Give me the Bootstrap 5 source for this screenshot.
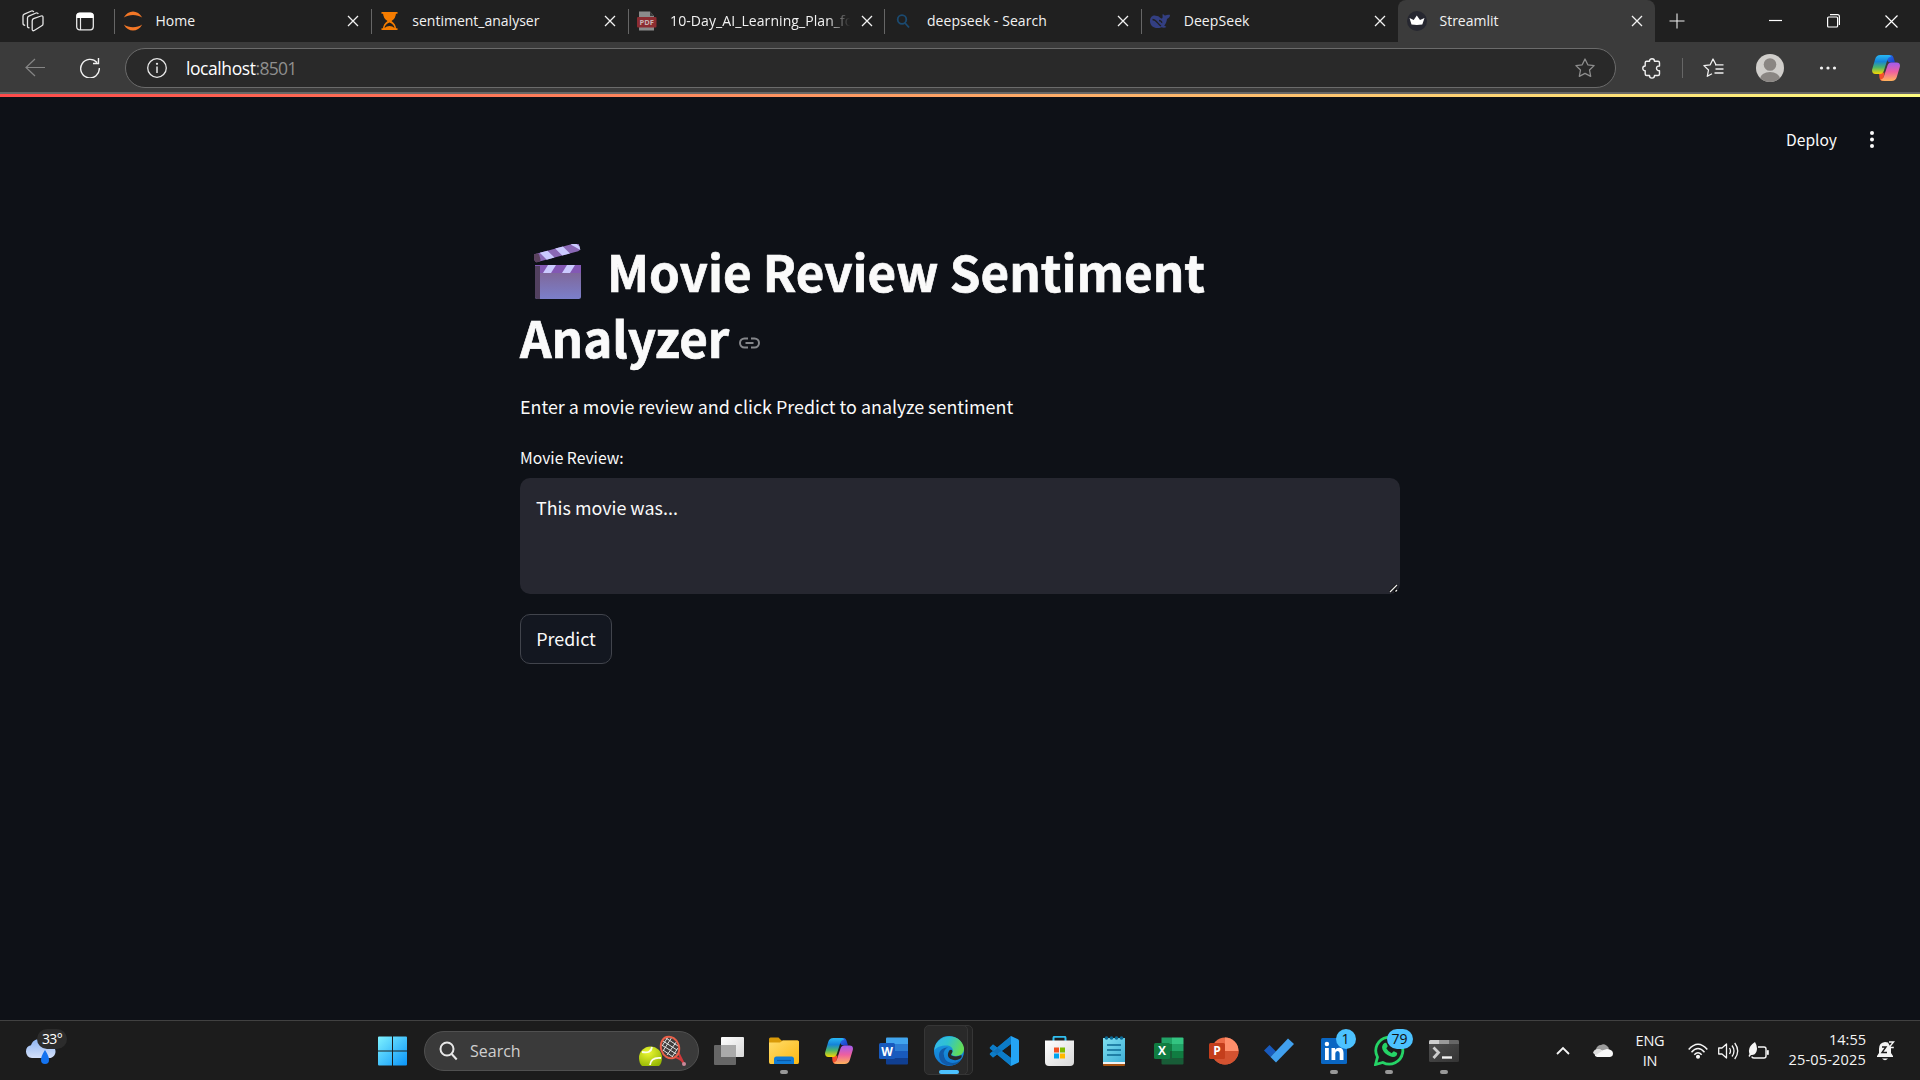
<!DOCTYPE html>
<html lang="en" data-bs-theme="dark">
<head>
<meta charset="utf-8">
<title>Streamlit</title>
<link rel="stylesheet" href="https://cdn.jsdelivr.net/npm/bootstrap@5.3.0/dist/css/bootstrap.min.css">
<style>
  html, body { height: 100%; }
  body { width: 1920px; height: 1080px; overflow: hidden; background: #0e1117; color: #fafafa; font-family: "Open Sans", "Noto Sans", sans-serif; }
  svg { display: block; flex: none; }

  .tabstrip { height: 42px; background: #202020; font-size: 14px; line-height: 20px; color: #f2f2f2; }
  .strip-left { width: 114px; padding-left: 22px; gap: 32px; }
  .tab { height: 42px; width: 256.8px; padding-left: 9px; position: relative; }
  .tab::before { content: ""; position: absolute; left: 0; top: 9px; width: 1px; height: 25px; background: #666; }
  .tab.current { background: #3b3b3b; border-radius: 8px 8px 0 0; width: 257px; }
  .tab.current::before { display: none; }
  .tab-icon { width: 20px; height: 20px; }
  .tab-title { margin-left: 12.500px; width: 183px; white-space: nowrap; overflow: hidden; }
  .tab-title.fade-end { -webkit-mask-image: linear-gradient(90deg, #000 158px, transparent 181px); mask-image: linear-gradient(90deg, #000 158px, transparent 181px); letter-spacing: .03px; }
  .tab-title.wide { padding-left: 1px; letter-spacing: .08px; }
  .tab-close { margin-left: 8.500px; }
  .win-buttons { padding-right: 22px; gap: 45px; }

  .toolbar { height: 50px; background: #3b3b3b; padding-top: 2px; }
  .back { margin-left: 25px; }
  .reload { margin-left: 35px; }
  .omnibox { width: 1491px; height: 40px; margin-left: 25px; border: 1px solid #6b6b6b; border-radius: 20px; background: #292929; padding: 0 20px 0 21px; }
  .address { margin-left: 19px; font-size: 17.5px; line-height: 24px; color: #fff; letter-spacing: -.42px; }
  .address .port { color: #8f8f8f; letter-spacing: -.7px; }
  .extensions { margin-left: 26px; }
  .tool-sep { width: 1px; height: 20px; background: #666; margin: 0 20px 0 21px; }
  .avatar { margin-left: 32px; }
  .more-dots, .copilot-btn { margin-left: 35px; }
  .edge-line { height: 2px; background: #676767; }
  .rainbow { height: 3px; background: linear-gradient(90deg, #ff4b4b, #fffd80); }

  .app { height: 926px; font-family: "Noto Sans CJK SC", "Noto Sans", sans-serif; }
  .app-header { padding: 30px 43px 0 0; height: 75px; gap: 30px; }
  .deploy { font-size: 15.6px; line-height: 24px; }
  .app-main { width: 880px; padding-top: 66px; }
  .app-title { font-size: 49.3px; line-height: 66px; font-weight: 700; margin: 0; color: #fafafa; -webkit-text-stroke: .7px #fafafa; }
  .clapper { display: inline-block; vertical-align: -8px; margin: 0 25px 0 14px; }
  .anchor { display: inline-block; vertical-align: 9px; margin-left: 10px; }
  .intro { font-size: 17.9px; line-height: 32px; margin: 20px 0 0; }
  .field-label { font-size: 15.7px; line-height: 24px; margin: 24px 0 8px; }
  .review-box { height: 116px; border: 0; border-radius: 10px; background: #262730; color: #fafafa; padding: 15px 16px; font-size: 17.9px; line-height: 28px; }
  .review-wrap { position: relative; }
  .grip { position: absolute; right: 2px; bottom: 1px; }
  .predict { width: 92px; height: 50px; margin-top: 20px; border: 1px solid #41444c; border-radius: 10px; background: #131720; color: #fafafa; font-size: 17.9px; line-height: 26px; padding: 0 0 2px; }

  .taskbar { height: 60px; background: #1c1c1c; border-top: 1px solid #414141; }
  .weather { width: 378px; padding-left: 25px; }
  .badge-pill { position: absolute; height: 20px; border-radius: 10px; display: flex; align-items: center; justify-content: center; font-size: 14px; line-height: 20px; }
  .temp { left: 12px; top: -7px; width: 30px; background: #2c2c2c; color: #fff; letter-spacing: -.6px; }
  .search-pill { width: 275px; height: 40px; margin-left: 17px; border: 1px solid #505050; border-radius: 20px; background: #3a3a3a; color: #cfcfcf; font-size: 16px; padding: 0 11px 0 14px; }
  .task-icons { margin-left: 2.500px; }
  .slot { width: 55px; height: 59px; position: relative; display: flex; align-items: center; justify-content: center; }
  .slot.running::after { content: ""; position: absolute; bottom: 6px; width: 8px; height: 4px; border-radius: 2px; background: #989898; }
  .slot.active::after { width: 20px; background: #4cc2ff; }
  .stack-back, .stack-front { position: absolute; top: 4px; height: 50px; border-radius: 5px; border: 1px solid #363636; background: #292929; }
  .stack-back { left: 12px; width: 39px; background: #242424; }
  .stack-front { left: 2px; width: 44px; }
  .slot svg { position: relative; }
  .count { top: 8px; background: #4cc2ff; color: #111; z-index: 2; }
  .count-one { left: 29px; width: 20px; }
  .count-many { left: 25px; width: 26px; }
  .tray { color: #f5f5f5; font-size: 14.5px; line-height: 20px; padding-right: 25px; }
  .onedrive { margin-left: 23px; }
  .lang { width: 40px; margin-left: 17px; text-align: center; letter-spacing: -.2px; }
  .wifi { margin-left: 18px; }
  .sound { margin-left: 10px; }
  .battery { margin-left: 9px; }
  .clock { width: 90px; text-align: right; margin-left: 7px; white-space: nowrap; padding-bottom: 2px; }
  .clock .date { letter-spacing: .18px; }
  .bell { margin-left: 11px; }
</style>
</head>
<body class="d-flex flex-column">

<svg width="0" height="0" class="position-absolute">
  <defs>
    <linearGradient id="cpA" x1="0" y1="0" x2="0" y2="1"><stop offset="0" stop-color="#28b8f5"/><stop offset=".35" stop-color="#1583d8"/><stop offset=".65" stop-color="#4cb56a"/><stop offset="1" stop-color="#f8d800"/></linearGradient>
    <linearGradient id="cpB" x1="0" y1="0" x2="0" y2="1"><stop offset="0" stop-color="#a05cf0"/><stop offset=".5" stop-color="#ee5fa0"/><stop offset="1" stop-color="#ffb45c"/></linearGradient>
    <linearGradient id="cpC" x1="0" y1="0" x2="1" y2="1"><stop offset="0" stop-color="#2a7cf0"/><stop offset="1" stop-color="#1a3ac8"/></linearGradient>
    <linearGradient id="winG" x1="0" y1="0" x2="1" y2="1"><stop offset="0" stop-color="#7ff2ff"/><stop offset="1" stop-color="#0a94f8"/></linearGradient>
    <linearGradient id="clapG" x1="0" y1="0" x2="0" y2="1"><stop offset="0" stop-color="#80618c"/><stop offset="1" stop-color="#7b7fcb"/></linearGradient>
    <linearGradient id="edgeA" x1="0" y1="0" x2="1" y2=".3"><stop offset="0" stop-color="#35b4ee"/><stop offset=".5" stop-color="#2fc3d0"/><stop offset="1" stop-color="#62dc58"/></linearGradient>
    <linearGradient id="edgeB" x1="0" y1="0" x2="0" y2="1"><stop offset="0" stop-color="#1a9fe0"/><stop offset="1" stop-color="#1278d4"/></linearGradient>
    <linearGradient id="folderG" x1="0" y1="0" x2="1" y2="1"><stop offset="0" stop-color="#ffdc6b"/><stop offset="1" stop-color="#fbb812"/></linearGradient>
    <linearGradient id="cloudG" x1="0" y1="0" x2="0" y2="1"><stop offset="0" stop-color="#8db4f2"/><stop offset="1" stop-color="#d3e0fa"/></linearGradient>
    <linearGradient id="noteG" x1="0" y1="0" x2="1" y2="1"><stop offset="0" stop-color="#7fe0f0"/><stop offset="1" stop-color="#3fb0d8"/></linearGradient>
    <linearGradient id="viewG" x1="0" y1="0" x2="1" y2="1"><stop offset="0" stop-color="#ffffff"/><stop offset="1" stop-color="#d8d8d8"/></linearGradient>
    <linearGradient id="termG" x1="0" y1="0" x2="1" y2="1"><stop offset="0" stop-color="#505050"/><stop offset="1" stop-color="#343434"/></linearGradient>
    <radialGradient id="ballG" cx=".4" cy=".3" r=".8"><stop offset="0" stop-color="#ecf834"/><stop offset="1" stop-color="#92b400"/></radialGradient>
    <symbol id="copilot" viewBox="0 0 28 26">
      <path d="M14 0h4.500c2 0 2.700 1.500 3.200 3.200L23 7.500h-4c-2.500 0-3.500-1-4-3z" fill="url(#cpC)"/>
      <path d="M7 18l5.500-.5L11 26c-2 0-3-1-3.500-3z" fill="#f4502c"/>
      <path d="M8.500 0h7.500c2 0 2.600.6 3 2-1.600-.5-3 .5-3.700 3l-3.500 11c-.7 2-1.700 3-4 3H3.500C.6 19-.4 16.800.2 14.200L3.200 4C4 1.300 5.600 0 8.500 0z" fill="url(#cpA)"/>
      <path d="M19.500 26H12c-2 0-3-.5-3.500-1.700 1.600.2 2.800-.8 3.500-3.300l3.500-10.500c.7-2 1.800-3 4.100-3h4.900c2.900 0 3.900 1.800 3.300 4.400L24.800 22c-.8 2.700-2.400 4-5.300 4z" fill="url(#cpB)"/>
    </symbol>
    <symbol id="cross" viewBox="0 0 12 12"><path d="M1 1l10 10M11 1L1 11" stroke="#f2f2f2" stroke-width="1.300" fill="none"/></symbol>
  </defs>
</svg>

<div class="tabstrip d-flex align-items-center flex-shrink-0">
  <div class="strip-left d-flex align-items-center">
    <svg width="22" height="22" viewBox="0 0 22 22" fill="none" stroke="#e4e4e4" stroke-width="1.300" stroke-linejoin="round"><path d="M11.500 8.700l7.500-2.700q2-.6 2 1.200v6.800q0 1.200-1.200 1.700l-7.600 4.800q-1.700.8-2-1V11q0-1.700 1.300-2.300z"/><path d="M7.500 17.700Q5.500 18 5.500 16V8q0-1.300 1.300-1.900L14 3q1.600-.5 2.300 1"/><path d="M3.200 15.300Q1 15.300 1 13.300V6q0-1.300 1.300-1.900L9.500 1q1.600-.5 2.300 1"/></svg>
    <svg width="18" height="19" viewBox="0 0 18 19"><rect x=".7" y="1.200" width="16.600" height="16.600" rx="3" fill="none" stroke="#e8e8e8" stroke-width="1.300"/><path d="M.5 6V3.500Q.5.700 3.500.700h11q3 0 3 2.800V6z" fill="#fff"/><path d="M4.500 6v12" stroke="#e8e8e8" stroke-width="1.200"/></svg>
  </div>
  <div class="tab d-flex align-items-center">
    <svg class="tab-icon" viewBox="0 0 20 20"><path d="M.8 6.500C5-1.500 15-1.500 19.200 6.500 14 3 6 3 .8 6.500zM.8 13.500C5 21.500 15 21.500 19.200 13.500 14 17 6 17 .8 13.500z" fill="#f37726"/></svg>
    <div class="tab-title">Home</div><svg class="tab-close" width="12" height="12"><use href="#cross"/></svg>
  </div>
  <div class="tab d-flex align-items-center">
    <svg class="tab-icon" viewBox="0 0 20 20"><path d="M1.500 1h16v1.800h-16zM1.500 17.200h16V19h-16z" fill="#f57c00"/><path d="M3 2h13q0 5-4.500 8 4.500 3 4.500 8H3q0-5 4.500-8Q3 7 3 2z" fill="#f57c00"/><path d="M4.500 17q.5-4 5-5.500 4.500 1.500 5 5.500-2-2-5-2t-5 2z" fill="#202020"/></svg>
    <div class="tab-title">sentiment_analyser</div><svg class="tab-close" width="12" height="12"><use href="#cross"/></svg>
  </div>
  <div class="tab d-flex align-items-center">
    <svg class="tab-icon" viewBox="0 0 20 20"><path d="M2 .5h11L17 5v14.500H2z" fill="#8b8b8b"/><path d="M13 .5L17 5h-4z" fill="#3c3c3c"/><rect y="6" width="19.500" height="10.500" rx="1" fill="#8c2c31"/><text x="9.700" y="14" font-family="Open Sans" font-size="7.500" font-weight="700" fill="#c9b5b5" text-anchor="middle">PDF</text></svg>
    <div class="tab-title fade-end wide">10-Day_AI_Learning_Plan_fo</div><svg class="tab-close" width="12" height="12"><use href="#cross"/></svg>
  </div>
  <div class="tab d-flex align-items-center">
    <svg class="tab-icon" viewBox="0 0 20 20" fill="none" stroke="#1b4a70" stroke-width="1.800"><circle cx="9" cy="8.500" r="4.300"/><path d="M12 12l4 4.500"/></svg>
    <div class="tab-title wide">deepseek - Search</div><svg class="tab-close" width="12" height="12"><use href="#cross"/></svg>
  </div>
  <div class="tab d-flex align-items-center">
    <svg class="tab-icon" viewBox="0 0 20 20"><path d="M0 10C0 5 4 3.500 7 5c1-.3 2 .5 3.500 2 1.500 1.200 2.500.5 2-2.500 0-1.500.5-2 1-1 1 1.500 2 1 3.500.6 1-.6 3-.6 3 0 0 2-1.500 3.500-3 3.800-.4 3-1.200 5-2.800 6.600l2.300 1.500c-2 1-3.700.7-5 .2C6 18.500 0 16 0 10z" fill="#333f82"/><path d="M2.500 8.500c4 0 5.500 5 8.500 6.500M9 9.500c1.500 0 3 1 2.700 2.500" stroke="#202020" stroke-width="1.300" fill="none"/></svg>
    <div class="tab-title wide">DeepSeek</div><svg class="tab-close" width="12" height="12"><use href="#cross"/></svg>
  </div>
  <div class="tab current d-flex align-items-center">
    <svg class="tab-icon" viewBox="0 0 20 20"><circle cx="10" cy="10" r="10" fill="#262730"/><path d="M2.500 7l4.200 2L9.800 4.500 13 9l4.500-2-2.200 6.500q-5.500.8-10.800 0z" fill="#fff"/></svg>
    <div class="tab-title">Streamlit</div><svg class="tab-close" width="12" height="12"><use href="#cross"/></svg>
  </div>
  <svg class="ms-2 ps-1" width="24" height="20" viewBox="0 0 24 20"><path d="M12 1v18M3 10h18" stroke="#eee" stroke-width="1.300"/></svg>
  <div class="win-buttons d-flex align-items-center ms-auto">
    <svg width="13" height="14" viewBox="0 0 13 14"><path d="M0 6.500h13" stroke="#fff" stroke-width="1.200"/></svg>
    <svg width="13" height="14" viewBox="0 0 13 14" fill="none" stroke="#fff" stroke-width="1.200"><rect x=".6" y="3" width="10" height="10" rx="1"/><path d="M3 .7h7.500Q12.400.700 12.400 2.600V11"/></svg>
    <svg width="13" height="13" viewBox="0 0 13 13"><path d="M.5.500l12 12M12.500.500l-12 12" stroke="#fff" stroke-width="1.200"/></svg>
  </div>
</div>

<div class="toolbar d-flex align-items-center flex-shrink-0">
  <svg class="back" width="20" height="20" viewBox="0 0 20 20" fill="none" stroke="#858585" stroke-width="1.200"><path d="M20 9.500H1M10 1L1 9.500 10 18"/></svg>
  <svg class="reload" width="20" height="20" viewBox="0 0 20 20" fill="none" stroke="#f2f2f2" stroke-width="1.400"><path d="M17 4.500A9.300 9.300 0 1 0 19.300 10M18.500 0v5.500H13"/></svg>
  <div class="omnibox d-flex align-items-center">
    <svg width="20" height="20" viewBox="0 0 20 20" fill="none" stroke="#e8e8e8" stroke-width="1.300"><circle cx="10" cy="10" r="9.300"/><path d="M10 8.500V15" stroke-width="1.500"/><circle cx="10" cy="5.800" r=".5"/></svg>
    <div class="address">localhost<span class="port">:8501</span></div>
    <svg class="ms-auto" width="20" height="20" viewBox="0 0 20 20" fill="none" stroke="#8d8d8d" stroke-width="1.300" stroke-linejoin="round"><path d="M10 1l2.800 5.800 6.300.8-4.600 4.400 1.200 6.300L10 15.300l-5.700 3 1.200-6.300L.9 7.600l6.300-.8z"/></svg>
  </div>
  <svg class="extensions" width="19" height="21" viewBox="0 0 19 21" fill="none" stroke="#f0f0f0" stroke-width="1.400" stroke-linejoin="round"><path d="M7.500 3.200C7.500 0 12.500 0 12.500 3.200H16Q17.500 3.200 17.500 4.700V8C13.500 7.500 13.500 13 17.500 12.700V16q0 1.500-1.500 1.500h-3.500c0 3.500-5 3.500-5 0H4.700Q3.200 17.500 3.200 16v-3.300C0 12.700 0 8 3.200 8V4.700q0-1.500 1.500-1.500z"/></svg>
  <div class="tool-sep"></div>
  <svg width="21" height="20" viewBox="0 0 21 20" fill="none" stroke="#f0f0f0" stroke-width="1.300" stroke-linejoin="round"><path d="M13 6.800L10 1 7.200 6.800.9 7.600 5.500 12l-1.200 6.300L9 15.800M12 6.800h8.500M12.500 11h8M11.500 15h9"/></svg>
  <svg class="avatar" width="28" height="28" viewBox="0 0 28 28"><defs><clipPath id="av"><circle cx="14" cy="14" r="14"/></clipPath></defs><g clip-path="url(#av)"><rect width="28" height="28" fill="#d0cecb"/><circle cx="14" cy="10.500" r="6.300" fill="#8a8683"/><ellipse cx="14" cy="25" rx="10" ry="7" fill="#8a8683"/></g></svg>
  <svg class="more-dots" width="18" height="6" viewBox="0 0 18 6" fill="#f2f2f2"><circle cx="2.500" cy="3" r="1.600"/><circle cx="9" cy="3" r="1.600"/><circle cx="15.500" cy="3" r="1.600"/></svg>
  <svg class="copilot-btn" width="28" height="26"><use href="#copilot"/></svg>
</div>
<div class="edge-line flex-shrink-0"></div>

<main class="app flex-shrink-0">
  <div class="rainbow"></div>
  <div class="app-header d-flex justify-content-end">
    <div class="deploy">Deploy</div>
    <svg width="10" height="24" viewBox="0 0 10 24" fill="#fafafa"><circle cx="5" cy="6" r="2"/><circle cx="5" cy="12.500" r="2"/><circle cx="5" cy="19" r="2"/></svg>
  </div>
  <div class="app-main mx-auto">
    <h1 class="app-title"><svg class="clapper" width="48" height="56" viewBox="0 0 48 56">
        <g transform="rotate(-15 2 18)"><rect x="1" y="10" width="47" height="8.500" rx="2.500" fill="#8a68b5"/><path d="M8 10h8l5 8.500h-8zM24 10h8l5 8.500h-8zM40 10h5l3 4v4z" fill="#cbcaff"/><rect x="1" y="10" width="6" height="8.500" rx="2" fill="#5b425f"/></g>
        <rect x="1" y="21" width="46" height="34" rx="2.500" fill="url(#clapG)"/><path d="M1 21h46v8H1z" fill="#8358b4"/><path d="M14 21h8l-5 8H9zM33 21h8l-5 8h-8z" fill="#cbcaff"/><path d="M1 22h5v33H3.500Q1 55 1 52.500z" fill="#51405f"/></svg>Movie Review Sentiment<br>Analyzer<svg class="anchor" width="21" height="12" viewBox="0 0 21 12" fill="none" stroke="#85878b" stroke-width="2"><path d="M9 1.500H5.500a4.500 4.500 0 0 0 0 9H9M12 1.500h3.500a4.500 4.500 0 0 1 0 9H12M6.500 6h8"/></svg></h1>
    <p class="intro">Enter a movie review and click Predict to analyze sentiment</p>
    <div class="field-label">Movie Review:</div>
    <div class="review-wrap">
      <div class="review-box">This movie was...</div>
      <svg class="grip" width="9" height="9" viewBox="0 0 9 9"><path d="M1 8l7-7M5.500 8L8 5.500" stroke="#000" stroke-width="2.500"/><path d="M1 8l7-7M6.500 7.500L8 6" stroke="#eee" stroke-width="1.300"/></svg>
    </div>
    <button class="btn predict">Predict</button>
  </div>
</main>

<footer class="taskbar d-flex align-items-center flex-shrink-0">
  <div class="weather"><div class="position-relative">
    <svg width="32" height="30" viewBox="0 0 32 30"><path d="M7 22a6.500 6.500 0 0 1-1-12.800C8 2 18 0 22 8.500c11-.5 11 13 2 13.500z" fill="url(#cloudG)"/><path d="M20 14q4 6 4 10a4 4 0 0 1-8 0q0-4 4-10z" fill="#1473f0"/></svg>
    <span class="badge-pill temp">33°</span>
  </div></div>
  <svg width="29" height="30" viewBox="0 0 29 30" fill="url(#winG)"><path d="M1 .500h13v14H0v-13Q0 .500 1 .500zM15 .500h13q1 0 1 1v13H15zM0 15.500h14v14H1q-1 0-1-1zM15 15.500h14v13q0 1-1 1H15z"/></svg>
  <div class="search-pill d-flex align-items-center">
    <svg width="19" height="20" viewBox="0 0 19 20" fill="none" stroke="#e8e8e8" stroke-width="2"><circle cx="8" cy="8" r="6.500"/><path d="M12.700 13l5 5.500"/></svg>
    <span class="ms-2 ps-1">Search</span>
    <svg class="ms-auto" width="48" height="32" viewBox="0 0 48 32"><path d="M33 22q8 0 11.500 6M38.500 16l6 12" stroke="#d0393b" stroke-width="2" fill="none"/><ellipse cx="31" cy="12.500" rx="9" ry="11" transform="rotate(-18 31 12.500)" fill="#403c3c"/><path d="M24 6l14 9M22.500 10l15 9M24 16l9-14M28 20l10-14M33 22l6-9M27 3l12 8M24 15l10 7M23 11l6-9" stroke="#e0e0e0" stroke-width="1"/><ellipse cx="31" cy="12.500" rx="9" ry="11" transform="rotate(-18 31 12.500)" fill="none" stroke="#e8604a" stroke-width="2"/><circle cx="45" cy="29" r="2" fill="#c89"/><path d="M0 23a11.500 11.500 0 0 1 23 0q0 5-3 8H3q-3-3-3-8z" fill="url(#ballG)"/><path d="M3 17q9 2 10-5M11 30q1-8 11-7" stroke="#fbfde8" stroke-width="1.800" fill="none"/></svg>
  </div>
  <div class="task-icons d-flex">
    <div class="slot"><svg width="30" height="28" viewBox="0 0 30 28"><rect x="7" width="23" height="20" rx="1" fill="url(#viewG)"/><rect y="8" width="22" height="20" rx="1" fill="#666"/><path d="M7 8h15v12H7z" fill="#aaa"/></svg></div>
    <div class="slot running"><svg width="30" height="27" viewBox="0 0 30 27"><path d="M0 8V2Q0 .500 1.500.500h8l3 3h16Q30 3.500 30 5v6H0z" fill="#d99a08"/><path d="M0 5.500h11l3-2h14.500Q30 3.500 30 5v20q0 2-1.500 2h-27Q0 27 0 25z" fill="url(#folderG)"/><path d="M5 27v-5q0-2.500 2.500-2.500h15Q25 19.500 25 22v5z" fill="#107cd6"/><path d="M8 23.500h14" stroke="#0a5aa8" stroke-width="1.200"/></svg></div>
    <div class="slot"><svg width="28" height="26"><use href="#copilot"/></svg></div>
    <div class="slot"><svg width="30" height="28" viewBox="0 0 30 28"><path d="M7 1.500Q7 .500 8 .500h20q1 0 1 1V7H7z" fill="#41a5ee"/><path d="M7 7h22v7H7z" fill="#2b7cd3"/><path d="M7 14h22v7H7z" fill="#185abd"/><path d="M7 21h22v5.500q0 1-1 1H8q-1 0-1-1z" fill="#103f91"/><rect y="6" width="16" height="16" rx="1.500" fill="#185abd"/><text x="8" y="18.500" font-family="Open Sans" font-size="12" font-weight="700" fill="#fff" text-anchor="middle">W</text></svg></div>
    <div class="slot running active"><span class="stack-back"></span><span class="stack-front"></span><svg width="30" height="30" viewBox="0 0 30 30"><circle cx="15" cy="15" r="15" fill="url(#edgeB)"/><path d="M10 18C9 27 20 30 27 23.500 22 32 8 32 8 20z" fill="#0c59a4"/><path d="M.5 13C3-3 27-4 30 12c.5 6-4.500 8.500-9 8-2.500-.3-4.500-1.300-3-3 2.500-4-1-7.500-5.500-7.500C7 9.500 2 11 .2 15z" fill="url(#edgeA)"/><path d="M18 17q-2 2 0 2.800 5 1.700 9.500-.8.800 2-1 3.500-5 3-10 .5-4-2.500-2-7 1-3 3.500-2 1 1.500 0 3z" fill="#292929"/><path d="M14 11.500C7 14 8 27 19 28.500c-7 2.500-14-2-14-9.500 0-4 4-8 9-7.500z" fill="#125aa8"/></svg></div>
    <div class="slot"><svg width="30" height="30" viewBox="0 0 30 30"><path d="M4 8.500l18 13.500V30L.8 11.800z" fill="#1e8ad6"/><path d="M4 21.500L22 8V0L.8 18.200z" fill="#0f6fb8"/><path d="M.8 11.500L4 8.500 22 22v8L1 12.800q-.5-.7-.2-1.300zM.8 18.500L4 21.500 22 8V0L1 17.200q-.5.700-.2 1.300z" fill="#0c7cc8"/><path d="M22 0l7 3.200q1 .5 1 1.600v20.400q0 1.100-1 1.600L22 30z" fill="#24a4f4"/></svg></div>
    <div class="slot"><svg width="29" height="30" viewBox="0 0 29 30"><path d="M8.500 6V2q0-1.200 1.200-1.200h9.600q1.200 0 1.200 1.200v4" fill="none" stroke="#31bff0" stroke-width="2"/><path d="M0 4.500h29V26q0 4-4 4H4q-4 0-4-4z" fill="url(#viewG)"/><path d="M9 11.500h5v5H9z" fill="#f25022"/><path d="M15 11.500h5v5h-5z" fill="#7fba00"/><path d="M9 17.500h5v5H9z" fill="#00a4ef"/><path d="M15 17.500h5v5h-5z" fill="#ffb900"/></svg></div>
    <div class="slot"><svg width="22" height="30" viewBox="0 0 22 30"><rect y="3" width="22" height="27" rx="1" fill="#a85412"/><rect y="2" width="22" height="26" fill="#f2f2f2"/><rect y="2" width="22" height="24" fill="url(#noteG)"/><path d="M4 9h14M4 14h14M4 19h14" stroke="#0c6a94" stroke-width="1.700"/><g fill="#0c6a94"><circle cx="3.500" cy="2" r="1.800"/><circle cx="8.500" cy="2" r="1.800"/><circle cx="13.500" cy="2" r="1.800"/><circle cx="18.500" cy="2" r="1.800"/></g></svg></div>
    <div class="slot"><svg width="30" height="28" viewBox="0 0 30 28"><path d="M7.500.500H18V7H7.500z" fill="#21a366"/><path d="M18 .500h10.500q1 0 1 1V7H18z" fill="#33c481"/><path d="M7.500 7H18v7H7.500z" fill="#107c41"/><path d="M18 7h11.500v7H18z" fill="#21a366"/><path d="M18 14h11.500v7H18z" fill="#107c41"/><path d="M7.500 14H18v7h11.500v5.500q0 1-1 1h-20q-1 0-1-1z" fill="#185c37"/><rect y="6" width="16" height="16" rx="1.500" fill="#107c41"/><text x="8" y="18.300" font-family="Open Sans" font-size="12" font-weight="700" fill="#fff" text-anchor="middle">X</text></svg></div>
    <div class="slot"><svg width="30" height="28" viewBox="0 0 30 28"><circle cx="16" cy="14" r="13.500" fill="#ed6c47"/><path d="M16 .5A13.500 13.500 0 0 1 29.500 14H16z" fill="#ff8f6b"/><path d="M29.500 14a13.500 13.500 0 0 1-27 0z" fill="#d35230"/><rect y="6" width="16" height="16" rx="1.500" fill="#c43e1c"/><text x="8" y="18.300" font-family="Open Sans" font-size="12" font-weight="700" fill="#fff" text-anchor="middle">P</text></svg></div>
    <div class="slot"><svg width="30" height="25" viewBox="0 0 30 25"><path d="M5.500 7L0 12.500l6.500 6.500 5.500-5.500z" fill="#185abd"/><path d="M6.500 19L24 .500 30 6 12 24.500z" fill="#41a0ee"/></svg></div>
    <div class="slot running"><svg width="26" height="26" viewBox="0 0 26 26"><rect width="26" height="26" rx="1.500" fill="#0a66c2"/><path d="M4 10h3.800v12H4zM10.500 10h3.600v1.800q1.300-2 3.900-2 4.500 0 4.500 5.200v7h-3.800v-6.500q0-2.500-2.100-2.500-2.300 0-2.300 2.500V22h-3.800z" fill="#fff"/><circle cx="5.900" cy="6" r="2.200" fill="#fff"/></svg><span class="badge-pill count count-one">1</span></div>
    <div class="slot running"><svg width="31" height="31" viewBox="0 0 31 31"><path d="M1.500 29.500l2-7.400a13.500 13.500 0 1 1 5.300 5.300z" fill="none" stroke="#25d366" stroke-width="2.800"/><path d="M10.500 8q1.500-.8 2 .3l1.200 2.700q0 .9-1.400 2.200 1.700 3.400 5.400 5 1.600-1.900 2.200-1.900l3 1.400q.8.600-.3 2.700-2.500 2.500-6.500.9Q10.500 19 8.500 14.500 7 10.500 10.500 8z" fill="#25d366"/></svg><span class="badge-pill count count-many">79</span></div>
    <div class="slot running"><svg width="30" height="22" viewBox="0 0 30 22"><rect width="30" height="22" rx="1.500" fill="url(#termG)"/><path d="M0 4V1.500Q0 0 1.500 0H10v4z" fill="#ccc"/><path d="M10 0h10v4H10z" fill="#999"/><path d="M20 0h8.500Q30 0 30 1.500V4H20z" fill="#666"/><path d="M4.500 7.500l5 5-5 5.500" stroke="#ccc" stroke-width="2.800" fill="none"/><path d="M13 17.500h10" stroke="#f2f2f2" stroke-width="2.400"/></svg></div>
  </div>
  <div class="tray d-flex align-items-center ms-auto">
    <svg width="14" height="9" viewBox="0 0 14 9" fill="none" stroke="#f5f5f5" stroke-width="1.800"><path d="M1 8l6-6 6 6"/></svg>
    <svg class="onedrive" width="20" height="13" viewBox="0 0 20 13"><path d="M3 6a5 5 0 0 1 5-5q2.500-1.500 5.500.5 2.500 1.700 2.500 4l-6 3z" fill="#9c9c9c"/><path d="M4 13a4 4 0 0 1 0-7.500q3-1 5 1L14 5q6 .5 6 4.500 0 3-3 3.500z" fill="#f8f8f8"/><path d="M0 9q1-4 5-4 2 0 4 2L3 11z" fill="#ddd"/></svg>
    <div class="lang">ENG<br>IN</div>
    <svg class="wifi" width="20" height="16" viewBox="0 0 20 16" fill="none" stroke="#f5f5f5" stroke-width="1.500"><path d="M.7 6.500Q10-4 19.300 6.500M3.500 9.200Q10 2 16.500 9.200M6.300 11.800q3.700-4 7.400 0"/><circle cx="10" cy="13.800" r="1.300" fill="#f5f5f5"/></svg>
    <svg class="sound" width="21" height="18" viewBox="0 0 21 18" fill="none" stroke="#f5f5f5" stroke-width="1.300" stroke-linejoin="round"><path d="M.7 6H4l4.500-4v14L4 12H.7zM11.500 6q2 3 0 6M14 3.500q4 5.500 0 11M16.700 1q6 8 0 16"/></svg>
    <svg class="battery" width="21" height="18" viewBox="0 0 21 18"><path d="M10 5h6q2 0 2 2v7q0 2-2 2H6q-2 0-2-1.500" fill="none" stroke="#f5f5f5" stroke-width="1.400"/><path d="M19 8.500h1.500v4H19z" fill="#f5f5f5" stroke="#f5f5f5" stroke-width=".6"/><path d="M7 0q3 5 1.500 9.500Q7 13.500 3 13l-1.500 2L.5 14l1-2Q-1 5 7 0z" fill="#f5f5f5"/></svg>
    <div class="clock">14:55<br><span class="date">25-05-2025</span></div>
    <svg class="bell" width="18" height="20" viewBox="0 0 18 20"><path d="M8 1Q2 1.500 2 8v4L0 15v1h16v-1l-2-3V7L11 1.500z" fill="#f5f5f5"/><path d="M5 17.500q3 3.500 6 0z" fill="#f5f5f5"/><path d="M5 6h4l-4 5.500h5" stroke="#1c1c1c" stroke-width="1.400" fill="none"/><path d="M12 1h4.500L12 6.500h4.800" stroke="#f5f5f5" stroke-width="1.400" fill="none"/></svg>
  </div>
</footer>
<script src="https://cdn.jsdelivr.net/npm/bootstrap@5.3.0/dist/js/bootstrap.bundle.min.js"></script>
</body>
</html>
